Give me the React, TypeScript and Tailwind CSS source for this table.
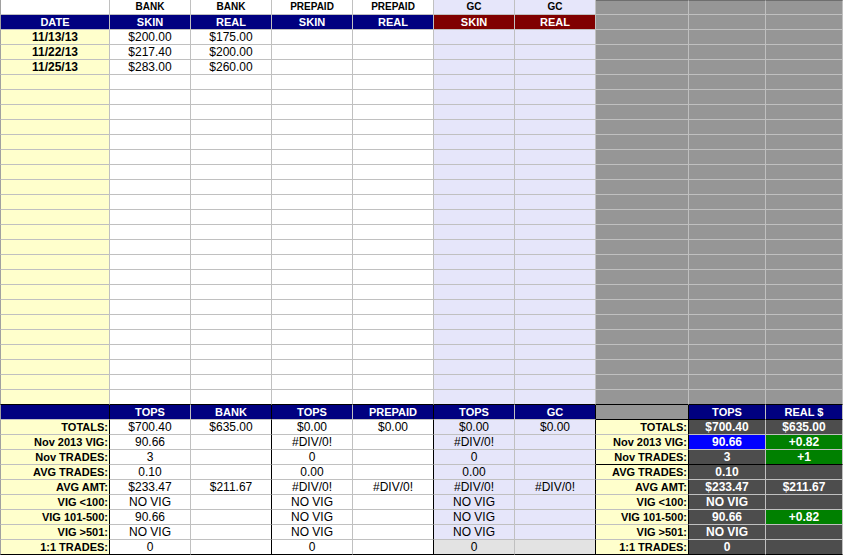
import React from "react";

type C = { c: string; t?: string };

const base =
  "box-border h-[15px] border-r border-b flex items-center overflow-hidden whitespace-nowrap leading-none";
const cen = "justify-center";
const rgt = "justify-end pr-px";

const bgW = "bg-white";
const bgY = "bg-[#ffffcc]";
const bgL = "bg-[#e6e6fa]";
const bgG = "bg-[#969696]";
const bgN = "bg-[#000080] text-white";
const bgR = "bg-[#800000] text-white";
const bgD = "bg-[#4d4d4d] text-white";
const bgB = "bg-[#0000ff] text-white";
const bgGr = "bg-[#008000] text-white";
const bgLG = "bg-[#e3e3e3]";

const rGray = "border-r-[#c0c0c0]";
const rBlk = "border-r-black";
const bGray = "border-b-[#c0c0c0]";
const bBlk = "border-b-black";

const hTop = "text-[10px] font-bold";
const hSub = "text-[11px] font-bold";
const hBot = "text-[11px] font-bold";
const val = "text-[12px] text-black";
const lab = "text-[11px] font-bold text-black";
const valB = "text-[12px] font-bold";
const leftEdge = "border-l border-l-[#a0a0a0]";
const grayTop = "border-t border-t-[#6e6e6e]";

const topHead = ["", "BANK", "BANK", "PREPAID", "PREPAID", "GC", "GC"];
const subHead = ["DATE", "SKIN", "REAL", "SKIN", "REAL", "SKIN", "REAL"];
const dataRows: string[][] = [
  ["11/13/13", "$200.00", "$175.00"],
  ["11/22/13", "$217.40", "$200.00"],
  ["11/25/13", "$283.00", "$260.00"],
];

const botHead = ["", "TOPS", "BANK", "TOPS", "PREPAID", "TOPS", "GC"];
const labels = [
  "TOTALS:",
  "Nov 2013 VIG:",
  "Nov TRADES:",
  "AVG TRADES:",
  "AVG AMT:",
  "VIG <100:",
  "VIG 101-500:",
  "VIG >501:",
  "1:1 TRADES:",
];
const leftVals: string[][] = [
  ["$700.40", "$635.00", "$0.00", "$0.00", "$0.00", "$0.00"],
  ["90.66", "", "#DIV/0!", "", "#DIV/0!", ""],
  ["3", "", "0", "", "0", ""],
  ["0.10", "", "0.00", "", "0.00", ""],
  ["$233.47", "$211.67", "#DIV/0!", "#DIV/0!", "#DIV/0!", "#DIV/0!"],
  ["NO VIG", "", "NO VIG", "", "NO VIG", ""],
  ["90.66", "", "NO VIG", "", "NO VIG", ""],
  ["NO VIG", "", "NO VIG", "", "NO VIG", ""],
  ["0", "", "0", "", "0", ""],
];
const rightVals: [string, string, string, string][] = [
  ["$700.40", bgD, "$635.00", bgD],
  ["90.66", bgB, "+0.82", bgGr],
  ["3", bgD, "+1", bgGr],
  ["0.10", bgD, "", bgD],
  ["$233.47", bgD, "$211.67", bgD],
  ["NO VIG", bgD, "", bgD],
  ["90.66", bgD, "+0.82", bgGr],
  ["NO VIG", bgD, "", bgD],
  ["0", bgD, "", bgD],
];

const botRightBorder = [rBlk, rGray, rBlk, rGray, rBlk, rGray, rBlk, rBlk, rGray, rGray];

function buildRows(): C[][] {
  const rows: C[][] = [];

  // row 0
  const r0: C[] = [];
  topHead.forEach((t, i) => {
    const bg = i >= 5 ? bgL : bgW;
    r0.push({ c: `${base} ${cen} ${bg} ${rGray} ${bGray} ${hTop} text-black ${i === 0 ? leftEdge : ""}`, t });
  });
  for (let i = 0; i < 3; i++) r0.push({ c: `${base} ${bgG} ${rGray} ${bGray} ${grayTop}` });
  rows.push(r0);

  // row 1
  const r1: C[] = [];
  subHead.forEach((t, i) => {
    const bg = i >= 5 ? bgR : bgN;
    r1.push({ c: `${base} ${cen} ${bg} ${rGray} ${bGray} ${hSub} ${i === 0 ? leftEdge : ""}`, t });
  });
  for (let i = 0; i < 3; i++) r1.push({ c: `${base} ${bgG} ${rGray} ${bGray}` });
  rows.push(r1);

  // rows 2..26
  for (let r = 0; r < 25; r++) {
    const last = r === 24;
    const bb = last ? bBlk : bGray;
    const d = dataRows[r] || [];
    const row: C[] = [];
    row.push({ c: `${base} ${cen} ${bgY} ${rGray} ${bb} ${leftEdge} text-[12px] font-bold text-black`, t: d[0] || "" });
    for (let i = 1; i <= 6; i++) {
      const bg = i >= 5 ? bgL : bgW;
      row.push({ c: `${base} ${cen} ${bg} ${rGray} ${bb} ${val}`, t: d[i] || "" });
    }
    for (let i = 0; i < 3; i++) row.push({ c: `${base} ${bgG} ${rGray} ${bb}` });
    rows.push(row);
  }

  // row 27 (bottom header)
  const h: C[] = [];
  botHead.forEach((t, i) => {
    h.push({ c: `${base} ${cen} ${bgN} ${botRightBorder[i]} ${bGray} ${hBot} ${i === 0 ? leftEdge : ""}`, t });
  });
  h.push({ c: `${base} ${bgG} ${rBlk} ${bBlk}` });
  h.push({ c: `${base} ${cen} ${bgN} ${rGray} ${bBlk} ${hBot}`, t: "TOPS" });
  h.push({ c: `${base} ${cen} ${bgN} ${rGray} ${bBlk} ${hBot}`, t: "REAL $" });
  rows.push(h);

  // rows 28..36
  labels.forEach((lbl, r) => {
    const last = r === labels.length - 1;
    const bb = last ? bBlk : bGray;
    const bbR = last || r === 2 ? bBlk : bGray;
    const row: C[] = [];
    row.push({ c: `${base} ${rgt} ${bgY} ${rBlk} ${bb} ${leftEdge} ${lab}`, t: lbl });
    for (let i = 1; i <= 6; i++) {
      const bg = i >= 5 ? (last ? bgLG : bgL) : bgW;
      row.push({ c: `${base} ${cen} ${bg} ${botRightBorder[i]} ${bb} ${val}`, t: leftVals[r][i - 1] });
    }
    row.push({ c: `${base} ${rgt} ${bgY} ${rBlk} ${bbR} ${lab}`, t: lbl });
    const rv = rightVals[r];
    row.push({ c: `${base} ${cen} ${rv[1]} ${rGray} ${bbR} ${valB}`, t: rv[0] });
    row.push({ c: `${base} ${cen} ${rv[3]} ${rGray} ${bbR} ${valB}`, t: rv[2] });
    rows.push(row);
  });

  return rows;
}

export default function App() {
  const rows = buildRows();
  return (
    <div className="w-[843px] h-[555px] overflow-hidden bg-white font-['Liberation_Sans',Arial,sans-serif]">
      <div className="grid grid-cols-[110px_81px_81px_81px_81px_81px_81px_93px_77px_77px]">
        {rows.map((row, ri) =>
          row.map((cell, ci) => (
            <div key={`${ri}-${ci}`} className={cell.c}>
              {cell.t}
            </div>
          ))
        )}
      </div>
    </div>
  );
}
